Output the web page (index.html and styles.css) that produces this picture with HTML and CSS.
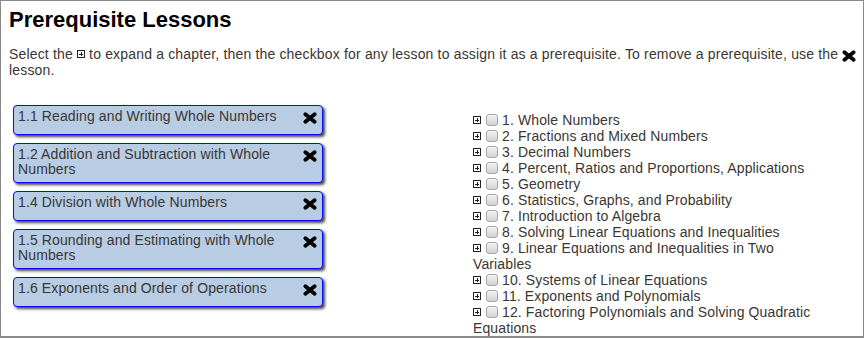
FILE: index.html
```html
<!DOCTYPE html>
<html>
<head>
<meta charset="utf-8">
<link rel="stylesheet" href="styles.css">
</head>
<body>
<div class="page">
  <h1 class="title">Prerequisite Lessons</h1>
  <p class="intro">Select the <span class="plus"></span> to expand a chapter, then the checkbox for any lesson to assign it as a prerequisite. To remove a prerequisite, use the <svg class="x x-inline" viewBox="0 0 14 12" width="14" height="12"><path d="M2.4 2.2 L11.6 9.8 M11.6 2.2 L2.4 9.8"/></svg> lesson.</p>
  <div class="cols">
    <div class="lessons">
      <div class="lesson"><span class="name">1.1 Reading and Writing Whole Numbers</span><svg class="x" viewBox="0 0 14 12" width="14" height="12"><path d="M2.4 2.2 L11.6 9.8 M11.6 2.2 L2.4 9.8"/></svg></div>
      <div class="lesson"><span class="name">1.2 Addition and Subtraction with Whole Numbers</span><svg class="x" viewBox="0 0 14 12" width="14" height="12"><path d="M2.4 2.2 L11.6 9.8 M11.6 2.2 L2.4 9.8"/></svg></div>
      <div class="lesson"><span class="name">1.4 Division with Whole Numbers</span><svg class="x" viewBox="0 0 14 12" width="14" height="12"><path d="M2.4 2.2 L11.6 9.8 M11.6 2.2 L2.4 9.8"/></svg></div>
      <div class="lesson"><span class="name">1.5 Rounding and Estimating with Whole Numbers</span><svg class="x" viewBox="0 0 14 12" width="14" height="12"><path d="M2.4 2.2 L11.6 9.8 M11.6 2.2 L2.4 9.8"/></svg></div>
      <div class="lesson"><span class="name">1.6 Exponents and Order of Operations</span><svg class="x" viewBox="0 0 14 12" width="14" height="12"><path d="M2.4 2.2 L11.6 9.8 M11.6 2.2 L2.4 9.8"/></svg></div>
    </div>
    <div class="tree">
      <div class="ch"><span class="plus"></span><span class="cb"></span> 1. Whole Numbers</div>
      <div class="ch"><span class="plus"></span><span class="cb"></span> 2. Fractions and Mixed Numbers</div>
      <div class="ch"><span class="plus"></span><span class="cb"></span> 3. Decimal Numbers</div>
      <div class="ch"><span class="plus"></span><span class="cb"></span> 4. Percent, Ratios and Proportions, Applications</div>
      <div class="ch"><span class="plus"></span><span class="cb"></span> 5. Geometry</div>
      <div class="ch"><span class="plus"></span><span class="cb"></span> 6. Statistics, Graphs, and Probability</div>
      <div class="ch"><span class="plus"></span><span class="cb"></span> 7. Introduction to Algebra</div>
      <div class="ch"><span class="plus"></span><span class="cb"></span> 8. Solving Linear Equations and Inequalities</div>
      <div class="ch"><span class="plus"></span><span class="cb"></span> 9. Linear Equations and Inequalities in Two Variables</div>
      <div class="ch"><span class="plus"></span><span class="cb"></span> 10. Systems of Linear Equations</div>
      <div class="ch"><span class="plus"></span><span class="cb"></span> 11. Exponents and Polynomials</div>
      <div class="ch"><span class="plus"></span><span class="cb"></span> 12. Factoring Polynomials and Solving Quadratic Equations</div>
    </div>
  </div>
</div>
</body>
</html>
```
FILE: styles.css
```css
html, body {
  margin: 0;
  padding: 0;
  background: #fff;
}
.page {
  box-sizing: border-box;
  width: 864px;
  height: 338px;
  border: 1px solid #8a8a8a;
  border-bottom-width: 2px;
  overflow: hidden;
  padding: 0 3px 0 8px;
  font-family: "Liberation Sans", Arial, sans-serif;
  color: #3a3632;
  letter-spacing: 0.12px;
}
.title {
  margin: 6px 0 0;
  font-size: 22px;
  line-height: 26px;
  font-weight: bold;
  color: #000;
  letter-spacing: 0;
}
.intro {
  margin: 13px 0 0;
  font-size: 14px;
  line-height: 16px;
  letter-spacing: 0.17px;
}
.plus {
  display: inline-block;
  box-sizing: border-box;
  width: 8px;
  height: 8px;
  border: 1px solid #222;
  background:
    linear-gradient(#222, #222) center / 4px 1px no-repeat,
    linear-gradient(#222, #222) center / 1px 4px no-repeat,
    #fff;
  vertical-align: 1px;
}
.x {
  display: inline-block;
  width: 14px;
  height: 12px;
  vertical-align: -1px;
}
.x-inline {
  vertical-align: 3px;
  margin: -6px 0 -6px;
}
.x path {
  stroke: #000;
  stroke-width: 3.8;
  stroke-linecap: round;
  fill: none;
}
.cols {
  display: grid;
  grid-template-columns: 316px 356px;
  column-gap: 144px;
  margin-top: 27px;
  padding-left: 4px;
}
.lessons {
  display: flex;
  flex-direction: column;
  gap: 8px;
}
.lesson {
  display: flex;
  justify-content: space-between;
  align-items: flex-start;
  width: 310px;
  box-sizing: border-box;
  padding: 3px 5px 5.5px 4px;
  background: #b8cce4;
  border: 1px solid #0a0aff;
  border-radius: 4px;
  box-shadow: 2px 2px 3px #444;
  font-size: 14px;
  line-height: 15px;
}
.lesson .name {
  max-width: 270px;
}
.lesson .x {
  display: block;
  flex: none;
  margin: 3px 0 4px;
}
.tree {
  margin-top: 7px;
  font-size: 14px;
  line-height: 16px;
}
.ch .plus {
  margin-right: 5px;
}
.cb {
  display: inline-block;
  box-sizing: border-box;
  width: 12px;
  height: 12px;
  border: 1px solid #a6a6a6;
  border-radius: 3px;
  background: linear-gradient(#f4f4f4, #d2d2d2);
  vertical-align: -1px;
}
```
